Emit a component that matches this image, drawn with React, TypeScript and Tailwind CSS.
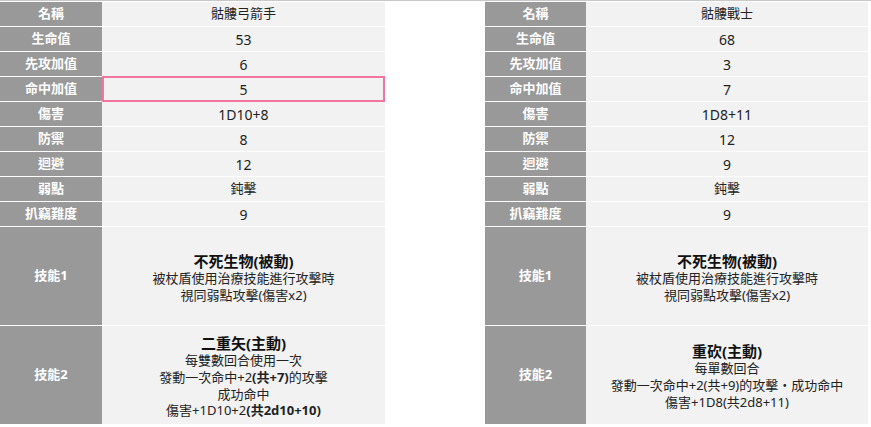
import React from 'react';

type Monster = {
  name: string;
  hp: string;
  init: string;
  hit: string;
  dmg: string;
  def: string;
  dodge: string;
  weak: string;
  steal: string;
  skill2: React.ReactNode;
  labelW: string;
  tableW: string;
  highlightHit?: boolean;
};

const Skill1 = () => (
  <div className="flex flex-col items-center pt-[3px]">
    <div className="text-[15px] font-bold leading-[18px] text-[#111]">不死生物(被動)</div>
    <div className="text-[13px] leading-[17px]">被杖盾使用治療技能進行攻擊時</div>
    <div className="text-[13px] leading-[17px]">視同弱點攻擊(傷害x2)</div>
  </div>
);

const archer: Monster = {
  name: '骷髏弓箭手',
  hp: '53',
  init: '6',
  hit: '5',
  dmg: '1D10+8',
  def: '8',
  dodge: '12',
  weak: '鈍擊',
  steal: '9',
  labelW: 'w-[102px]',
  tableW: 'w-[385px]',
  highlightHit: true,
  skill2: (
    <div className="flex flex-col items-center pt-[3px]">
      <div className="text-[15px] font-bold leading-[18px] text-[#111]">二重矢(主動)</div>
      <div className="text-[13px] leading-[16.75px]">每雙數回合使用一次</div>
      <div className="text-[13px] leading-[16.75px]">
        發動一次命中+2<span className="font-bold">(共+7)</span>的攻擊
      </div>
      <div className="text-[13px] leading-[16.75px]">成功命中</div>
      <div className="text-[13px] leading-[16.75px]">
        傷害+1D10+2<span className="font-bold">(共2d10+10)</span>
      </div>
    </div>
  ),
};

const warrior: Monster = {
  name: '骷髏戰士',
  hp: '68',
  init: '3',
  hit: '7',
  dmg: '1D8+11',
  def: '12',
  dodge: '9',
  weak: '鈍擊',
  steal: '9',
  labelW: 'w-[101px]',
  tableW: 'w-[383px]',
  skill2: (
    <div className="flex flex-col items-center pt-[3px]">
      <div className="text-[15px] font-bold leading-[18px] text-[#111]">重砍(主動)</div>
      <div className="text-[13px] leading-[17px]">每單數回合</div>
      <div className="text-[13px] leading-[17px]">發動一次命中+2(共+9)的攻擊・成功命中</div>
      <div className="text-[13px] leading-[17px]">傷害+1D8(共2d8+11)</div>
    </div>
  ),
};

const Row = ({
  label,
  labelW,
  tall = false,
  highlight = false,
  children,
}: {
  label: string;
  labelW: string;
  tall?: boolean;
  highlight?: boolean;
  children: React.ReactNode;
}) => (
  <div className={`flex ${tall ? 'h-[98px]' : 'h-[24px]'}`}>
    <div className={`${labelW} shrink-0 bg-[#999999] flex items-center justify-center text-white font-bold text-[13px]`}>
      {label}
    </div>
    <div className="relative flex-1 bg-[#f2f2f2] flex items-center justify-center text-[#222] text-[13px]">
      {highlight && (
        <div className="absolute -top-px -bottom-px left-0 right-0 border-2 border-[#f0759f]" />
      )}
      {children}
    </div>
  </div>
);

const Table = ({ m }: { m: Monster }) => {
  const rows: [string, string, boolean?][] = [
    ['名稱', m.name],
    ['生命值', m.hp],
    ['先攻加值', m.init],
    ['命中加值', m.hit, m.highlightHit],
    ['傷害', m.dmg],
    ['防禦', m.def],
    ['迴避', m.dodge],
    ['弱點', m.weak],
    ['扒竊難度', m.steal],
  ];
  return (
    <div className={`${m.tableW} shrink-0 flex flex-col`}>
      <div className="flex h-px">
        <div className={`${m.labelW} shrink-0 border-l border-r border-[#c8c8c8]`} />
        <div className="flex-1 border-r border-[#c8c8c8]" />
      </div>
      <div className="flex flex-col gap-px pt-px">
        {rows.map(([label, value, hl]) => (
          <Row key={label} label={label} labelW={m.labelW} highlight={!!hl}>
            <span className={/^[0-9D+]+$/.test(value) ? 'text-[14px]' : ''}>{value}</span>
          </Row>
        ))}
        <Row label="技能1" labelW={m.labelW} tall>
          <Skill1 />
        </Row>
        <Row label="技能2" labelW={m.labelW} tall>
          {m.skill2}
        </Row>
      </div>
    </div>
  );
};

export default function App() {
  return (
    <div
      className="w-[871px] h-[427px] bg-white overflow-hidden"
      style={{ fontFamily: '"Noto Sans", "Noto Sans CJK TC", sans-serif' }}
    >
      <div className="h-px bg-[#c8c8c8]" />
      <div className="flex -mt-px">
        <Table m={archer} />
        <div className="w-[100px] shrink-0" />
        <Table m={warrior} />
      </div>
    </div>
  );
}
